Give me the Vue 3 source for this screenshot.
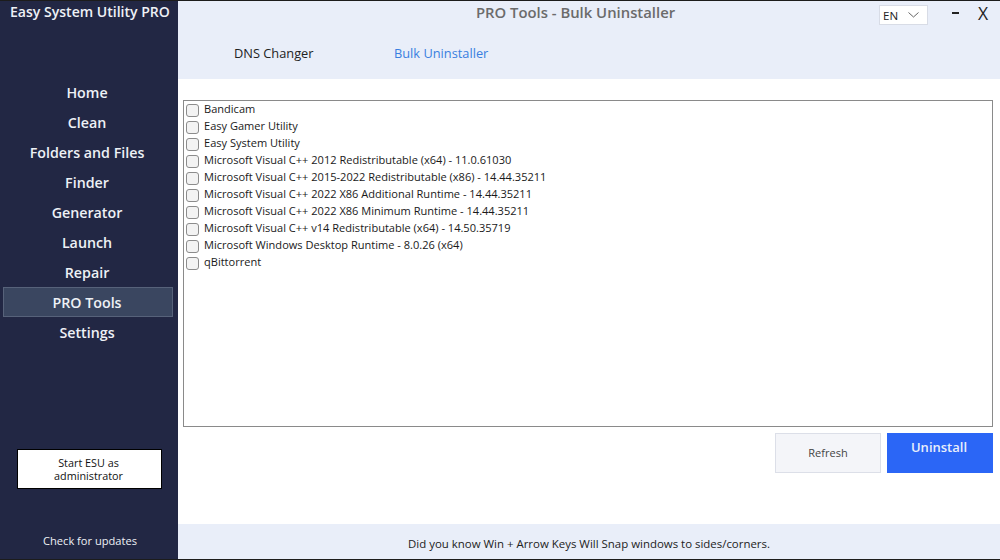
<template>
  <div class="window">
    <aside class="sidebar">
      <div class="brand">Easy System Utility PRO</div>
      <nav class="nav">
        <div
          v-for="item in navItems"
          :key="item"
          class="nav-item"
          :class="{ 'nav-item--active': item === 'PRO Tools' }"
        >
          {{ item }}
        </div>
      </nav>
      <button type="button" class="admin-btn">Start ESU as<br />administrator</button>
      <div class="updates">Check for updates</div>
    </aside>

    <main class="main">
      <header class="top">
        <div class="top-row">
          <div class="page-title">PRO Tools - Bulk Uninstaller</div>
          <div class="lang">
            <span>EN</span>
            <svg width="11" height="6" viewBox="0 0 11 6" fill="none">
              <path d="M0.5 0.5 L5.5 5 L10.5 0.5" stroke="#666" stroke-width="1" />
            </svg>
          </div>
          <div class="win-min"></div>
          <div class="win-close">X</div>
        </div>
        <div class="tabs">
          <div class="tab tab--dns">DNS Changer</div>
          <div class="tab tab--active">Bulk Uninstaller</div>
        </div>
      </header>

      <section class="content">
        <div class="list">
          <label v-for="app in apps" :key="app" class="list-row">
            <span class="check"></span>
            <span class="list-text">{{ app }}</span>
          </label>
        </div>
        <div class="actions">
          <button type="button" class="btn btn--light">Refresh</button>
          <button type="button" class="btn btn--primary">Uninstall</button>
        </div>
      </section>

      <footer class="tip">Did you know Win + Arrow Keys Will Snap windows to sides/corners.</footer>
    </main>
  </div>
</template>

<script setup>
const navItems = [
  'Home',
  'Clean',
  'Folders and Files',
  'Finder',
  'Generator',
  'Launch',
  'Repair',
  'PRO Tools',
  'Settings',
]

const apps = [
  'Bandicam',
  'Easy Gamer Utility',
  'Easy System Utility',
  'Microsoft Visual C++ 2012 Redistributable (x64) - 11.0.61030',
  'Microsoft Visual C++ 2015-2022 Redistributable (x86) - 14.44.35211',
  'Microsoft Visual C++ 2022 X86 Additional Runtime - 14.44.35211',
  'Microsoft Visual C++ 2022 X86 Minimum Runtime - 14.44.35211',
  'Microsoft Visual C++ v14 Redistributable (x64) - 14.50.35719',
  'Microsoft Windows Desktop Runtime - 8.0.26 (x64)',
  'qBittorrent',
]
</script>

<style>
html, body { margin: 0; background: #fff; }
</style>

<style scoped>
.window {
  width: 1000px;
  height: 560px;
  box-sizing: border-box;
  display: flex;
  overflow: hidden;
  background: #fff;
  border-top: 1px solid #1c1c1c;
  border-bottom: 1px solid #1c1c1c;
  font-family: "Open Sans", "Noto Sans", sans-serif;
}

.sidebar {
  width: 178px;
  flex: none;
  background: #222744;
  display: flex;
  flex-direction: column;
  color: #fff;
}
.brand {
  padding: 1px 0 0 10px;
  height: 76px;
  box-sizing: border-box;
  font-size: 14.05px;
  font-weight: 600;
  line-height: 20px;
  white-space: nowrap;
  color: #eef1f6;
}
.nav {
  display: flex;
  flex-direction: column;
  padding: 0 5px 0 3px;
}
.nav-item {
  height: 30px;
  line-height: 31px;
  box-sizing: border-box;
  text-align: center;
  text-indent: -2px;
  font-size: 14.25px;
  font-weight: 600;
  color: #eef1f6;
  white-space: nowrap;
}
.nav-item--active {
  background: #3a4660;
  border: 1px solid #57627a;
  line-height: 29px;
}
.admin-btn {
  margin: 102px 0 0 17px;
  width: 145px;
  height: 40px;
  box-sizing: border-box;
  padding: 0 2px 0 0;
  background: #fff;
  border: 1px solid #000;
  color: #111;
  font-family: inherit;
  font-size: 10.8px;
  line-height: 13px;
}
.updates {
  margin-top: 45px;
  padding-left: 2px;
  text-align: center;
  font-size: 11.1px;
  line-height: 14px;
  color: #eef1f6;
}

.main {
  flex: 1;
  display: flex;
  flex-direction: column;
  min-width: 0;
}
.top {
  height: 78px;
  flex: none;
  background: #e9eef9;
}
.top-row {
  height: 35px;
  display: flex;
  align-items: flex-start;
}
.page-title {
  flex: none;
  width: 795px;
  margin-right: -94px;
  padding-top: 1px;
  text-align: center;
  font-size: 14.85px;
  font-weight: 600;
  line-height: 20px;
  color: #6b6b6b;
  white-space: nowrap;
}
.lang {
  margin-top: 4px;
  width: 49px;
  height: 20px;
  box-sizing: border-box;
  background: #fff;
  border: 1px solid #d8dce6;
  display: flex;
  align-items: center;
  justify-content: space-between;
  padding: 0 8px 0 3px;
  font-size: 11.5px;
  color: #222;
}
.win-min {
  width: 7px;
  height: 2px;
  margin: 11px 0 0 24px;
  background: #222;
}
.win-close {
  margin-left: 19px;
  margin-top: 1px;
  font-size: 17.5px;
  line-height: 22px;
  color: #222;
}
.tabs {
  display: flex;
  padding-top: 8px;
}
.tab {
  font-size: 12.8px;
  font-weight: 500;
  line-height: 18px;
  color: #222;
  white-space: nowrap;
}
.tab--dns {
  width: 160px;
  margin-left: 56px;
}
.tab--active { color: #3a7fe0; }

.content {
  flex: 1;
  padding: 21px 7px 0 5px;
  display: flex;
  flex-direction: column;
}
.list {
  height: 327px;
  box-sizing: border-box;
  border: 1px solid #8a8a8a;
  padding: 0 0 0 2px;
  display: flex;
  flex-direction: column;
}
.list-row {
  height: 17px;
  display: flex;
  align-items: center;
  gap: 5px;
  white-space: nowrap;
}
.check {
  width: 13px;
  height: 13px;
  margin-top: 2px;
  flex: none;
  box-sizing: border-box;
  border: 1px solid #8c8c8c;
  border-radius: 3px;
  background: #f3f3f3;
}
.list-text {
  margin-bottom: 2px;
  font-size: 11.05px;
  line-height: 14px;
  color: #1a1a1a;
}
.actions {
  display: flex;
  justify-content: flex-end;
  gap: 6px;
  margin-top: 6px;
}
.btn {
  width: 106px;
  height: 40px;
  box-sizing: border-box;
  padding: 0;
  font-family: inherit;
}
.btn--light {
  background: #f4f5f9;
  border: 1px solid #dcdfe8;
  color: #444;
  font-size: 11px;
  padding-bottom: 2px;
}
.btn--primary {
  background: #2b66f6;
  border: none;
  color: #e9eefb;
  font-size: 13px;
  font-weight: 600;
  padding: 0 2px 12px 0;
}

.tip {
  height: 35px;
  flex: none;
  background: #e9eef9;
  text-align: center;
  font-size: 11.45px;
  line-height: 40px;
  color: #222;
  white-space: nowrap;
}
</style>
